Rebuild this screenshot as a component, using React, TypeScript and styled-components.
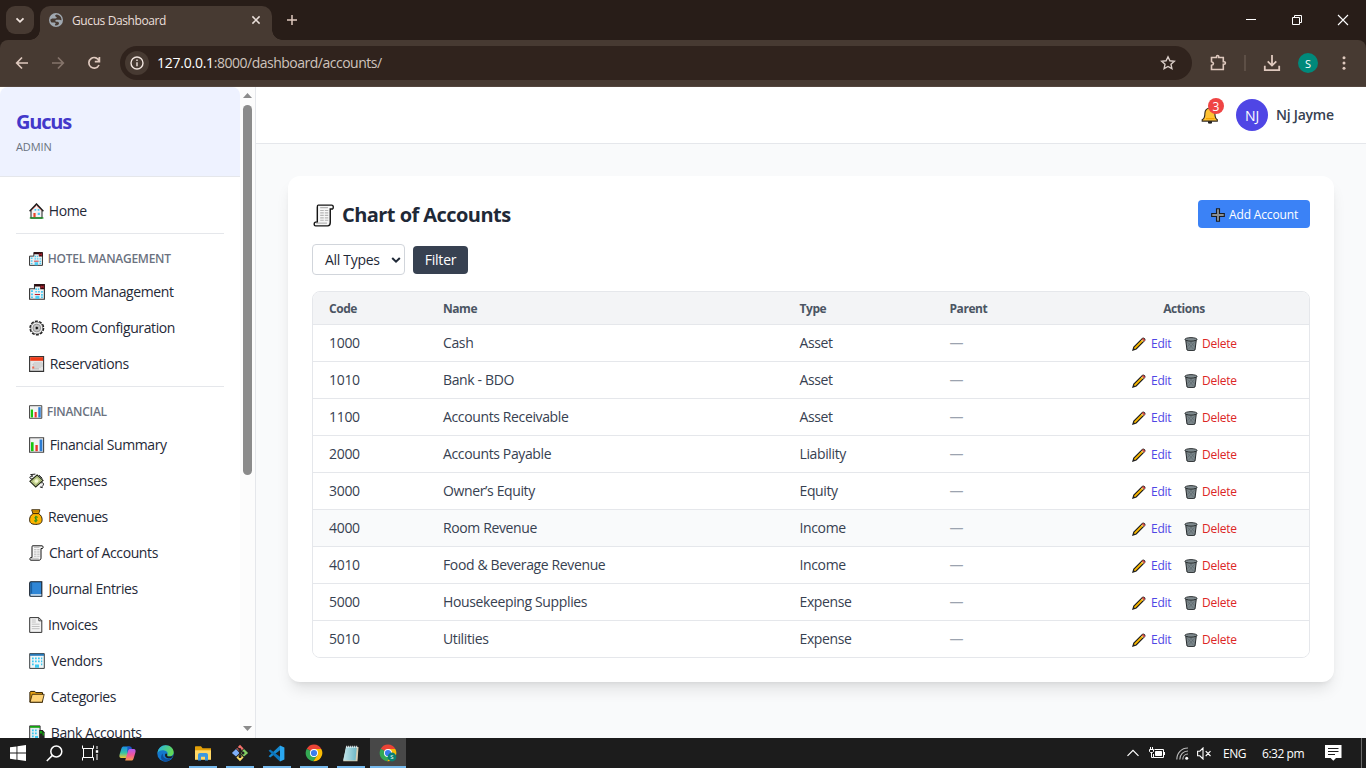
import React from 'react';
import styled, { createGlobalStyle } from 'styled-components';

const GlobalStyle = createGlobalStyle`
  *, *::before, *::after { box-sizing: border-box; }
  html, body { margin: 0; padding: 0; }
  body {
    width: 1366px; height: 768px; overflow: hidden;
    font-family: "Open Sans", "Noto Sans", sans-serif;
    color: #1f2937;
  }
  svg { display: block; flex: none; }
  button { font: inherit; border: 0; margin: 0; padding: 0; background: none; letter-spacing: inherit; }
`;

const Screen = styled.div`
  width: 1366px; height: 768px; display: flex; flex-direction: column; overflow: hidden;
`;

/* ---------- Browser frame ---------- */

const TabStrip = styled.div`
  height: 40px; flex: none; display: flex; background: #281d18; padding-left: 6px;
`;
const TabSearch = styled.button`
  width: 28px; height: 28px; margin-top: 6px; border-radius: 9px; background: #473a32;
  display: flex; align-items: center; justify-content: center;
`;
const Tab = styled.div`
  position: relative; width: 232px; height: 34px; margin: 6px 0 0 6px; padding: 0 9px 6px 9px;
  border-radius: 10px 10px 0 0; background: #473a32; display: flex; align-items: center;
  &::before, &::after {
    content: ""; position: absolute; bottom: 0; width: 10px; height: 10px;
  }
  &::before { left: -10px; background: radial-gradient(circle at 0 0, transparent 9.5px, #473a32 10px); }
  &::after { right: -10px; background: radial-gradient(circle at 100% 0, transparent 9.5px, #473a32 10px); }
`;
const TabTitle = styled.span`
  flex: 1; margin-left: 9px; padding-top: 2px; font-size: 12px; line-height: 16px; color: #eadfda; letter-spacing: -0.4px;
`;
const NewTab = styled.button`
  width: 40px; height: 40px; display: flex; align-items: center; justify-content: center;
`;
const WindowControls = styled.div`
  margin-left: auto; display: flex;
`;
const WindowButton = styled.button`
  width: 46px; height: 40px; display: flex; align-items: center; justify-content: center;
`;
const ToolbarBack = styled.div`
  height: 47px; flex: none; background: #281d18;
`;
const Toolbar = styled.div`
  height: 47px; background: #473a32; border-bottom: 1px solid #54463e; border-radius: 8px 8px 0 0;
  display: flex; align-items: center; padding-left: 4px; overflow: hidden;
`;
const ToolButton = styled.button<{ $w?: number }>`
  width: ${p => p.$w ?? 36}px; height: 36px; flex: none; display: flex; align-items: center; justify-content: center;
`;
const Omnibox = styled.div`
  width: 1072px; height: 34px; flex: none; margin-left: 8px; padding: 0 16px 0 5px; border-radius: 17px; background: #30231d;
  display: flex; align-items: center;
`;
const SiteInfo = styled.span`
  width: 24px; height: 24px; border-radius: 50%; background: #473a32; display: flex; align-items: center; justify-content: center;
`;
const Address = styled.span`
  flex: 1; margin-left: 8px; font-size: 14px; line-height: 20px; color: #cfc3bd; letter-spacing: -0.5px;
  b { font-weight: 400; color: #fff; letter-spacing: -0.25px; }
`;
const ToolbarRule = styled.span`
  width: 2px; height: 16px; flex: none; background: #5d4f46;
`;
const Profile = styled.span`
  width: 20px; height: 20px; flex: none; border-radius: 50%; background: #00897b; color: #fff; font-size: 11px;
  display: flex; align-items: center; justify-content: center;
`;

/* ---------- Application ---------- */

const Page = styled.div`
  flex: 1; min-height: 0; display: flex; background: #f9fafb;
`;
const Sidebar = styled.aside`
  width: 256px; flex: none; display: flex; background: #fff; border-right: 1px solid #e5e7eb; overflow: hidden;
`;
const SidebarBody = styled.div`
  width: 240px; overflow: hidden;
`;
const Brand = styled.div`
  height: 90px; padding: 21px 16px 0; background: #eef2ff; border-bottom: 1px solid #e5e7eb; border-radius: 8px 8px 0 0;
`;
const BrandName = styled.div`
  font-size: 20px; line-height: 28px; font-weight: 700; color: #4338ca; letter-spacing: -1.2px;
`;
const BrandRole = styled.div`
  margin-top: 3px; font-size: 11px; line-height: 16px; color: #6b7280; letter-spacing: -0.1px;
`;
const Nav = styled.nav`
  padding: 16px 16px 0;
`;
const NavItem = styled.a`
  height: 36px; padding-left: 12px; display: flex; align-items: center;
  font-size: 14px; line-height: 20px; color: #1f2937; letter-spacing: -0.4px; white-space: nowrap;
`;
const NavGroup = styled.div`
  margin-top: 4px; border-top: 1px solid #e5e7eb; padding-top: 16px;
`;
const NavLabel = styled.div`
  height: 24px; padding: 1px 0 7px 12px; display: flex; align-items: center;
  font-size: 12px; line-height: 16px; font-weight: 600; color: #6b7280; letter-spacing: -0.27px; white-space: nowrap;
`;
const IconSlot = styled.span<{ $w: number }>`
  width: ${p => p.$w}px; padding-left: 1px; flex: none;
`;
const ScrollTrack = styled.div`
  width: 15px; background: #fcfcfc; display: flex; flex-direction: column; align-items: center; padding: 6px 0 7px;
`;
const ScrollThumb = styled.div`
  width: 9px; height: 370px; margin: 7px 0 auto; border-radius: 5px; background: #8b8b8b;
`;
const Content = styled.div`
  flex: 1; min-width: 0; display: flex; flex-direction: column;
`;
const TopBar = styled.header`
  height: 57px; flex: none; padding-right: 32px; background: #fff; border-bottom: 1px solid #e5e7eb;
  display: flex; align-items: center; justify-content: flex-end;
`;
const Bell = styled.span`
  position: relative; width: 18px; height: 18px; margin-right: 17px;
`;
const Badge = styled.span`
  position: absolute; left: 7px; top: -8px; width: 16px; height: 16px; border-radius: 50%; background: #ef4444;
  color: #fff; font-size: 12px; line-height: 17px; text-align: center;
`;
const Avatar = styled.span`
  width: 32px; height: 32px; margin-right: 8px; border-radius: 50%; background: #4f46e5; color: #fff;
  font-size: 14px; font-weight: 500; letter-spacing: -0.2px; display: flex; align-items: center; justify-content: center;
`;
const UserName = styled.span`
  width: 58px; font-size: 14px; line-height: 20px; font-weight: 600; color: #374151; white-space: nowrap; letter-spacing: -0.25px;
`;
const Card = styled.main`
  margin: 32px 32px 0; height: 506px; padding: 24px; background: #fff; border-radius: 12px;
  box-shadow: 0 10px 15px -3px rgba(0,0,0,.1), 0 4px 6px -4px rgba(0,0,0,.1);
`;
const CardHead = styled.div`
  height: 28px; display: flex; align-items: center; justify-content: space-between;
`;
const Title = styled.h1`
  margin: 0; padding: 2px 0 0 1px; display: flex; align-items: center; gap: 6px;
  font-size: 20px; line-height: 28px; font-weight: 700; color: #1f2937; letter-spacing: -0.55px;
`;
const PrimaryButton = styled.button`
  && { width: 112px; height: 28px; padding: 1px 0 0 13px; border-radius: 4px; background: #3b82f6; color: #fff;
  display: flex; align-items: center; gap: 4px; font-size: 12px; font-weight: 500; letter-spacing: -0.15px; white-space: nowrap; }
`;
const Filters = styled.div`
  margin-top: 16px; height: 31px; display: flex; align-items: center; gap: 8px;
`;
const TypeSelect = styled.button`
  && { width: 93px; height: 31px; padding: 0 3px 0 12px; border: 1px solid #d1d5db; border-radius: 4px; background: #fff;
  color: #1f2937; display: flex; align-items: center; justify-content: space-between; font-size: 14px; letter-spacing: -0.3px; }
`;
const FilterButton = styled.button`
  && { width: 55px; height: 28px; border-radius: 4px; background: #374151; color: #fff; font-size: 14px; letter-spacing: -0.2px; }
`;
const Table = styled.div`
  margin-top: 16px; border: 1px solid #e5e7eb; border-radius: 8px; overflow: hidden;
`;
const Row = styled.div<{ $hover?: boolean }>`
  height: 37px; display: grid; grid-template-columns: 114px 356.5px 150px 125.5px 250px; align-items: center;
  border-top: 1px solid #e5e7eb; background: ${p => (p.$hover ? '#f9fafb' : '#fff')};
  font-size: 14px; color: #374151; letter-spacing: -0.37px;
`;
const HeadRow = styled(Row)`
  height: 32px; padding-top: 2px; border-top: 0; background: #f3f4f6; color: #4b5563; font-size: 12px; font-weight: 700; letter-spacing: -0.45px;
`;
const Cell = styled.span<{ $center?: boolean; $muted?: boolean; $code?: boolean }>`
  padding: ${p => (p.$center ? '0' : '0 0 0 16px')}; text-align: ${p => (p.$center ? 'center' : 'left')};
  color: ${p => (p.$muted ? '#9ca3af' : 'inherit')}; line-height: 20px; white-space: nowrap;
  letter-spacing: ${p => (p.$code ? '-0.3px' : 'inherit')};
`;
const Actions = styled.span`
  display: flex; align-items: center; padding: 2px 0 0 73px; font-size: 12px; letter-spacing: -0.25px;
`;
const Action = styled.a<{ $danger?: boolean }>`
  width: ${p => (p.$danger ? 'auto' : '51.5px')}; display: flex; align-items: center; gap: ${p => (p.$danger ? 4.5 : 5)}px;
  color: ${p => (p.$danger ? '#dc2626' : '#4f46e5')}; line-height: 16px;
`;

/* ---------- Windows taskbar ---------- */

const Taskbar = styled.footer`
  height: 30px; flex: none; background: #1c1c1c; display: flex; color: #fff;
`;
const TaskSlot = styled.span<{ $w?: number; $open?: boolean; $active?: boolean }>`
  width: ${p => p.$w ?? 37}px; height: 30px; display: flex; flex-direction: column; align-items: center; justify-content: center;
  background: ${p => (p.$active ? 'linear-gradient(#484848,#484848) center / 36px 100% no-repeat' : 'transparent')};
  position: relative;
  &::after {
    content: ""; position: absolute; bottom: 0; height: 2px; background: #76b9ed;
    width: ${p => (p.$active ? 36 : p.$open ? 28 : 0)}px;
  }
`;
const Tray = styled.div`
  margin-left: auto; display: flex; align-items: center; font-size: 12px; letter-spacing: -0.45px; white-space: nowrap;
`;
const TrayItem = styled.span<{ $w: number }>`
  width: ${p => p.$w}px; flex: none; display: flex; align-items: center;
`;
const ShowDesktop = styled.span`
  width: 5px; height: 30px; border-left: 1px solid #6a6a6a;
`;

/* ---------- Drawings ---------- */

type IconProps = { s?: number };
const Svg = ({ s = 16, children }: { s?: number; children: React.ReactNode }) => (
  <svg width={s} height={s} viewBox="0 0 16 16" fill="none">{children}</svg>
);

const HomeIcon = ({ s }: IconProps) => (
  <Svg s={s}>
    <path d="M2 7 7.5 1.5 13 7v8H2z" fill="#f2f2f2" stroke="#222" />
    <path d="M.6 8.2 7.5 1 14.4 8.2" stroke="#222" strokeWidth="1.5" />
    <path d="M2.6 7.5 7.5 2.5l4.9 5" stroke="#d06a62" strokeWidth=".8" />
    <path d="M5.5 6h1.7v1.8H5.5zM8.7 6h1.7v1.8H8.7zM8.7 9.8h2.2v2.2H8.7z" fill="#4cc8f4" />
    <path d="M4.4 10h2.2v4.4H4.4z" fill="#e8472b" />
    <path d="M.8 15h13.6" stroke="#16911f" strokeWidth="1.4" />
  </Svg>
);
const HotelIcon = ({ s }: IconProps) => (
  <Svg s={s}>
    <path d="M.6 4.7h4.9V.6h9.9v14.7H.6z" fill="#eceff0" stroke="#333" strokeWidth="1.1" />
    <path d="M5.6.2h10v5h-4.4V2.6H5.6z" fill="#2d0a0d" />
    <path d="M12.2 1.5v2.7M14.2 1.5v2.7M12.2 2.8h2" stroke="#d0283b" strokeWidth=".8" />
    <path d="M2 6.3h2v1.7H2zM6.3 4.2h1.8v1.7H6.3zM9 4.2h1.2v1.7H9zM6.3 7h1.8v1.6H6.3zM9 7h1.8v1.6H9zM12 7h1.9v1.7H12zM2 9.5h2v1.7H2zM12 10h1.9v1.7H12zM2 12.5h2v1.5H2zM12 12.6h1.9v1.4H12zM6.4 11.8h4v3.2h-4z" fill="#4dcbf3" />
    <path d="M5.8 10.5H11" stroke="#bf1f2b" />
  </Svg>
);
const GearIcon = ({ s }: IconProps) => (
  <Svg s={s}>
    <circle cx="7.8" cy="8" r="6.7" stroke="#222" strokeWidth="1.6" strokeDasharray="2.9 1.31" />
    <circle cx="7.8" cy="8" r="6" fill="#ececec" stroke="#444" strokeWidth=".7" />
    <circle cx="7.8" cy="8" r="3.9" fill="#c4c4c4" stroke="#888" strokeWidth=".8" />
    <circle cx="7.8" cy="8" r="1.7" fill="#111" stroke="#eee" strokeWidth=".5" />
  </Svg>
);
const CalendarIcon = ({ s }: IconProps) => (
  <Svg s={s}>
    <path d="M.6.6h14v14.8H.6z" fill="#e5e5e5" stroke="#333" strokeWidth="1.1" />
    <path d="M1.2 1.2h12.9v3.6H1.2z" fill="#f03a17" />
    <path d="M5 7h8v5H3V9h2z" fill="#fff" />
    <path d="M5 7h8M3 9h10M3 11h10M3 13h7M5 7v6M7 7v6M9 7v6M11 7v5M13 7v4" stroke="#aaa" strokeWidth=".6" />
    <path d="M3.2 10.5h2v2h-2z" fill="#ef6950" />
  </Svg>
);
const BarsIcon = ({ s }: IconProps) => (
  <Svg s={s}>
    <path d="M.6.8h14v14.4H.6z" fill="#f2f2f2" stroke="#444" strokeWidth="1.1" />
    <path d="M2 5.2h2.6v9H2z" fill="#16c60c" />
    <path d="M6.4 8h2.4v6.2H6.4z" fill="#e8352b" />
    <path d="M10.6 2.5h2.8v11.7h-2.8z" fill="#2b7cd3" />
  </Svg>
);
const CashIcon = ({ s }: IconProps) => (
  <Svg s={s}>
    <path d="M3.6 5.8C1.5 6.2.4 4.8 1 3.8c.8-.5 1.8 0 2.8-.8L1.6 1.6l4.8-.5M12.3 9.8c2.1-.6 2.6 1 2 2.3-.5 1-1.8 1.2-1 2.6l-2.4-.8" fill="#eee" stroke="#222" strokeWidth="1" />
    <path d="M8.1 2 14 7.4 6.7 14 .9 8.3z" fill="#cddb98" stroke="#222818" strokeWidth="1.1" />
    <path d="m8 3.8 4 3.6-5.2 4.7-4-3.8z" stroke="#7d8e50" strokeWidth=".6" />
    <path d="m10 2.2 3.4 3.2" stroke="#222" strokeWidth="1" />
    <circle cx="7.4" cy="8" r="1.8" fill="#f4f8d4" />
  </Svg>
);
const MoneyBagIcon = ({ s }: IconProps) => (
  <Svg s={s}>
    <path d="M2.7.8h8.2L9.7 4.6c2.6 1.8 3.4 3.9 3.4 6.2 0 3-1.8 4.6-6.3 4.6S.6 13.8.6 10.8c0-2.3.8-4.4 3.4-6.2z" fill="#fdb400" stroke="#33240a" strokeWidth="1" />
    <path d="M3.4 1.4h6.8l-.8 2.1H4.2z" fill="#c98500" />
    <path d="M4 4.6h5.8" stroke="#3d2500" />
    <path d="M8.8 8.3c-2.6-1.3-4 .7-1.9 1.6 2 1 1.7 2.8-1.8 1.9M6.9 6.8v6.6" stroke="#17911d" strokeWidth="1" />
  </Svg>
);
const ScrollIcon = ({ s }: IconProps) => (
  <Svg s={s}>
    <path d="M3.5.8h9.5c1.4 0 1.4 2.2.5 2.7h-1.5v9.4c0 1.5-.8 2.3-1.8 2.3H1.8C.5 15.2.5 13 1.6 12.6H3V2.2C3 1.3 3.1.8 3.5.8z" fill="#f7f7f7" stroke="#151515" strokeWidth="1" />
    <path d="M5 2.5h5.4M5 4.5h2.5M8.2 4.5h2.4M5 6.2h2.5M8.2 6.2h2.4M5 7.9h2.5M8.2 7.9h2.4M5 9.6h2.5M8.2 9.6h2.4M5 11.3h2.5M8.2 11.3h2.4" stroke="#b5b5b5" strokeWidth=".8" />
    <path d="M2.2 13.3h7.5" stroke="#aaa" strokeWidth=".7" />
  </Svg>
);
const BookIcon = ({ s }: IconProps) => (
  <Svg s={s}>
    <path d="M.7 2.2C.7 1.2 1.2.8 2 .8h10.8v14.5H2c-.8 0-1.3-.5-1.3-1.3z" fill="#2f86d6" stroke="#151c26" strokeWidth="1.1" />
    <path d="M2.6 1.5v11" stroke="#0c4c8c" strokeWidth=".7" />
    <path d="M1.6 13.2h10.8v1.5H1.6z" fill="#dbe5ec" />
  </Svg>
);
const PageIcon = ({ s }: IconProps) => (
  <Svg s={s}>
    <path d="M.7.6h9.1l3 3v11.8H.7z" fill="#f3f3f3" stroke="#333" strokeWidth="1" />
    <path d="M9.8.8v3h3" stroke="#333" strokeWidth=".9" />
    <path d="M2.8 5h4M2.8 7.2h7.8M2.8 9.5h7.8M2.8 11.7h7.8M2.8 3h4" stroke="#bbb" strokeWidth=".9" />
  </Svg>
);
const OfficeIcon = ({ s }: IconProps) => (
  <Svg s={s}>
    <path d="M.7.6h14.6v14.8H.7z" fill="#eef5f7" stroke="#3a3f42" strokeWidth="1" />
    <path d="M1 .8h14v2H1z" fill="#2678b8" />
    <path d="M3 4.5h1.7v1.7H3zM6 4.5h1.7v1.7H6zM9 4.5h1.7v1.7H9zM12 4.5h1.3v1.7H12zM3 7.5h1.7v1.7H3zM6 7.5h1.7v1.7H6zM9 7.5h1.7v1.7H9zM12 7.5h1.3v1.7H12zM3 10.5h1.7v1.7H3zM12 10.5h1.3v1.7H12zM6 11.5h4v3.2H6z" fill="#3bc8f1" />
  </Svg>
);
const FolderIcon = ({ s }: IconProps) => (
  <Svg s={s}>
    <path d="M.9 13.2V3.1l.8-.7h4.1l1 1.2h6.7v9.6z" fill="#e8a313" stroke="#2b1b00" strokeWidth="1" />
    <path d="M3.2 5.3h12l-1.9 7.9H1.1z" fill="#ffd375" stroke="#2b1b00" strokeWidth=".8" />
  </Svg>
);
const BankIcon = ({ s }: IconProps) => (
  <Svg s={s}>
    <path d="M.7.9h10.4v14.3H.7z" fill="#e4edf0" stroke="#333" strokeWidth="1" />
    <path d="M1 1h10v1.8H1z" fill="#13a10e" />
    <path d="M3 4.5h1.7v1.7H3zM6 4.5h1.7v1.7H6zM3 7.5h1.7v1.7H3zM6 7.5h1.7v1.7H6zM3 10.5h1.7v1.7H3zM6 11h3v4H6z" fill="#3bc8f1" />
    <path d="M10.2 5h3.4l2 2.3v8.5h-5.4z" fill="#222" />
    <path d="M11 6h2.2v2.6H11zM13.6 7.6h1.3v3h-1.3z" fill="#13a10e" />
  </Svg>
);
const PencilIcon = () => (
  <Svg s={14}>
    <path d="M1 15 2.1 11.4 12 1.5c1-1 3.4 1.1 2.5 2.4L4.8 13.7z" fill="#fbb900" stroke="#1a1a1a" strokeWidth="1.3" />
    <path d="m12 1.8 2.5 2.4" stroke="#e0485c" strokeWidth="1.7" />
    <path d="m10.6 3.2 2.3 2.3" stroke="#ddd" strokeWidth="1" />
    <path d="m1.2 14.8.6-2.4 1.8 1.8z" fill="#222" />
  </Svg>
);
const TrashIcon = () => (
  <Svg s={14}>
    <path d="M2 3.8h12l-1.4 11-2 .8H5.4l-2-.8z" fill="#7b868a" stroke="#1f2325" strokeWidth="1.1" />
    <path d="m4 6 7 8M7 5l5 6M12 6l-7 8M9 5l-5 6" stroke="#59646a" strokeWidth=".7" />
    <ellipse cx="8" cy="2.7" rx="6.9" ry="2" fill="#7f8a8e" stroke="#1f2325" strokeWidth="1" />
  </Svg>
);
const PlusIcon = () => (
  <svg width="14" height="14" viewBox="0 0 14 14">
    <path d="M5.5.7h3v4.8h4.8v3H8.5v4.8h-3V8.5H.7v-3h4.8z" fill="#8a8f94" stroke="#181c22" strokeWidth="1.1" />
  </svg>
);
const BellIcon = () => (
  <svg width="18" height="18" viewBox="0 0 18 18" fill="none">
    <path d="M7.5 15.2h3v1.9h-3z" fill="#222" stroke="#222" />
    <path d="M9 2c3.3 0 4.9 2.3 4.9 5.2 0 3.7.6 5.6 2.4 6.5v1.4H1.2v-1.4c2-.9 2.7-2.8 2.7-6.5C3.9 4.3 5.7 2 9 2z" fill="#ffc233" stroke="#332a20" strokeWidth="1.1" />
    <path d="M5 12.6h8.5" stroke="#f5a300" strokeWidth="1.2" />
  </svg>
);

const GlobeIcon = () => (
  <svg width="14" height="14" viewBox="0 0 14 14">
    <circle cx="7" cy="7" r="7" fill="#a0a8b0" />
    <path d="M7.6 1.6C5.8 2 5.6 3.4 7.2 3.9c1.2.4.4 1.5-.8 1.5H3.9C2.6 5.4 2 6 1.3 6.8c0 1 .5 2 1.2 2.8h3c1 0 1.6.8.8 1.5-.6.6-.5 1.1.2 1.4 2.2.3 3.6-.9 3.5-2.2-.1-1.2-1.2-1.5-2.4-1.5-1.6 0-1.8-1.6-.3-2h3.1c.8.1 1.2.7 2.1.5.3-2.6-1.6-5.3-4.9-5.7z" fill="#473a32" />
  </svg>
);
const Stroke = ({ d, w = 16, c = '#dfc9be', sw = 1.7, h }: { d: string; w?: number; h?: number; c?: string; sw?: number }) => (
  <svg width={w} height={h ?? w} viewBox={`0 0 ${w} ${h ?? w}`} fill="none" stroke={c} strokeWidth={sw}><path d={d} /></svg>
);

const ChromeIcon = ({ badge }: { badge?: boolean }) => (
  <svg width="18" height="18" viewBox="0 0 18 18">
    <path d="M9 9 1.8 4.8A8.2 8.2 0 0 1 16.3 5H9z" fill="#ea4335" />
    <path d="M9 9 1.8 4.7A8.3 8.3 0 0 0 8.2 17.2L12.6 11z" fill="#34a853" />
    <path d="M9 5h7.3A8.3 8.3 0 0 1 8.2 17.2L12.6 11z" fill="#fbbc04" />
    <circle cx="9" cy="9" r="4" fill="#fff" /><circle cx="9" cy="9" r="3.1" fill="#3b7ded" />
    {badge && <><circle cx="13" cy="13" r="4.4" fill="#0b8073" /><text x="13" y="15.2" textAnchor="middle" fontSize="6" fill="#fff">S</text></>}
  </svg>
);
const WindowsLogo = () => (
  <svg width="16" height="16" viewBox="0 0 16 16" fill="#fff"><path d="M0 2.3 6.5 1.4v6.2H0zM7.4 1.3 16 0v7.6H7.4zM0 8.5h6.5v6.2L0 13.8zM7.4 8.5H16V16l-8.6-1.2z" /></svg>
);
const TaskViewIcon = () => (
  <svg width="17" height="16" viewBox="0 0 17 16" fill="none" stroke="#fff" strokeWidth="1">
    <path d="M.5.5v3h11v-3M.5 15.5v-3h11v3M1.5 3.5v9M10.5 3.5v9M15 1v3M15 9v6" /><path d="M13.8 5.2h2.4v2.6h-2.4z" fill="#fff" stroke="none" />
  </svg>
);
const CopilotIcon = () => (
  <svg width="17" height="15" viewBox="0 0 17 15">
    <defs>
      <linearGradient id="cpA" x1="0" y1="0" x2="0" y2="1"><stop stopColor="#1b8de8" /><stop offset=".55" stopColor="#35c3a5" /><stop offset="1" stopColor="#f3c832" /></linearGradient>
      <linearGradient id="cpB" x1="0" y1="0" x2="0" y2="1"><stop stopColor="#ae5cf0" /><stop offset=".5" stopColor="#f2569a" /><stop offset="1" stopColor="#fb9a4d" /></linearGradient>
    </defs>
    <path d="M4.8.5h6L8 10.2c-.4 1.3-1 1.8-2 1.8H2.3C.4 12 .1 10.2.6 8.4L2.5 2.3C2.9 1 3.6.5 4.8.5z" fill="url(#cpA)" />
    <path d="M12.2 14.6h-6L9 4.8C9.4 3.5 10 3 11 3h3.7c1.9 0 2.2 1.8 1.7 3.6l-1.9 6.2c-.4 1.3-1.1 1.8-2.3 1.8z" fill="url(#cpB)" />
    <path d="M8.5.5h2.6c1 0 1.5.7 1.8 2.5H11c-1 0-1.6.5-2 1.8l-.9 2.9z" fill="#1b56c7" />
  </svg>
);
const EdgeIcon = () => (
  <svg width="17" height="17" viewBox="0 0 17 17">
    <defs><linearGradient id="edA" x1="0" y1="0" x2="1" y2=".3"><stop stopColor="#25b3e8" /><stop offset="1" stopColor="#62d957" /></linearGradient></defs>
    <circle cx="8.5" cy="8.5" r="8.2" fill="#1377cc" />
    <path d="M.4 8.2C1.2 3.2 4.7.3 8.7.3c4.8 0 8 3.4 8 7 0 2.6-1.9 4-4.1 4-1.7 0-2.8-.6-2.3-1.3 1-1.5.2-4.3-3.2-4.6C3.6 5 1.3 6.4.4 8.2z" fill="url(#edA)" />
    <path d="M6 8.4c-1 4 3.1 7 9 4.4-1 1.7-3.6 3.9-6.6 3.9-4 0-6.2-5.7-2.4-8.3z" fill="#0d4f9e" />
    <path d="M10.2 10c-.5.9.6 1.6 2.4 1.6 1.5 0 2.7-.4 3.5-1.3l-1 2.2c-3.4 1.8-7.7.4-7-3 .4-1.7 2.2-1.4 2.1.5z" fill="#1c1c1c" />
  </svg>
);
const ExplorerIcon = () => (
  <svg width="16" height="15" viewBox="0 0 16 15"><path d="M0 1.2C0 .5.3.2 1 .2h5l1.6 2H16V13H0z" fill="#e3a008" /><path d="M0 4.3h16v9.5H0z" fill="#ffd765" /><path d="M3 14.6V9.3C3 7.8 3.8 7 5 7h6c1.3 0 2 .8 2 2.3v5.3h-3v-3.8H6v3.8z" fill="#3a97e0" /></svg>
);
const GitIcon = () => (
  <svg width="18" height="18" viewBox="0 0 18 18"><path d="m9 .8 3.6 3.6L9 8 5.4 4.4z" fill="#f3716a" /><path d="M5 4.9 8.5 9 5 12.6.9 9z" fill="#7eaef8" /><path d="m13 4.9 4.1 4.1-4.1 3.6L9.5 9z" fill="#82cf63" /><path d="m9 10 3.6 3.6L9 17.2l-3.6-3.6z" fill="#f9dc6c" /><path d="M9 4v10M6 3l6 6" stroke="#231f20" strokeWidth="1.3" /><circle cx="9" cy="6" r="1.5" fill="#231f20" /><circle cx="12" cy="9" r="1.5" fill="#231f20" /><circle cx="9" cy="12.4" r="1.5" fill="#231f20" /></svg>
);
const CodeIcon = () => (
  <svg width="17" height="17" viewBox="0 0 17 17"><path d="M12 .5 16.4 2.4v12.2L12 16.5z" fill="#2aa7f0" /><path d="M12 .5v4.7L2.2 12.6.6 11.2z" fill="#1689d1" /><path d="M12 16.5v-4.7L2.2 4.4.6 5.8z" fill="#0c75bd" /></svg>
);
const NotepadIcon = () => (
  <svg width="17" height="17" viewBox="0 0 17 17">
    <defs><linearGradient id="npA" x1="0" y1="0" x2="1" y2="0"><stop stopColor="#c4e6ea" /><stop offset="1" stopColor="#6db6c4" /></linearGradient></defs>
    <path d="M4.2 2h12.3l-1 14.2H1.2z" fill="#d8ccb0" /><path d="M4 1.8h10.8L13.6 15.6H1.2z" fill="url(#npA)" /><path d="M4.2 1.8h12" stroke="#e8eef0" strokeWidth="2.2" strokeDasharray="1 1" />
  </svg>
);

/* ---------- Data ---------- */

type NavEntry = [React.ReactNode, string, number];
const hotel: NavEntry[] = [
  [<HotelIcon />, 'Room Management', 22.8],
  [<GearIcon />, 'Room Configuration', 22.8],
  [<CalendarIcon />, 'Reservations', 21.8],
];
const financial: NavEntry[] = [
  [<BarsIcon />, 'Financial Summary', 21.8],
  [<CashIcon />, 'Expenses', 20.8],
  [<MoneyBagIcon />, 'Revenues', 20],
  [<ScrollIcon />, 'Chart of Accounts', 20.9],
  [<BookIcon />, 'Journal Entries', 20.6],
  [<PageIcon />, 'Invoices', 20],
  [<OfficeIcon />, 'Vendors', 23],
  [<FolderIcon />, 'Categories', 22.8],
  [<BankIcon />, 'Bank Accounts', 22.8],
];
const accounts = [
  ['1000', 'Cash', 'Asset'],
  ['1010', 'Bank - BDO', 'Asset'],
  ['1100', 'Accounts Receivable', 'Asset'],
  ['2000', 'Accounts Payable', 'Liability'],
  ['3000', 'Owner’s Equity', 'Equity'],
  ['4000', 'Room Revenue', 'Income'],
  ['4010', 'Food & Beverage Revenue', 'Income'],
  ['5000', 'Housekeeping Supplies', 'Expense'],
  ['5010', 'Utilities', 'Expense'],
];

const NavLinks = ({ items }: { items: NavEntry[] }) => (
  <>
    {items.map(([icon, label, w]) => (
      <NavItem key={label}><IconSlot $w={w}>{icon}</IconSlot>{label}</NavItem>
    ))}
  </>
);

export default function App() {
  return (
    <Screen>
      <GlobalStyle />
      <TabStrip>
        <TabSearch><Stroke w={10} d="M1.5 3.3 5 6.8l3.5-3.5" c="#f0e4de" sw={1.8} /></TabSearch>
        <Tab>
          <GlobeIcon />
          <TabTitle>Gucus Dashboard</TabTitle>
          <Stroke w={14} d="M3.4 3.4l7.2 7.2M10.6 3.4l-7.2 7.2" c="#eadfda" sw={1.5} />
        </Tab>
        <NewTab><Stroke w={12} d="M6 1v10M1 6h10" sw={1.5} /></NewTab>
        <WindowControls>
          <WindowButton><Stroke w={10} d="M0 4.5h10" c="#fff" sw={1} /></WindowButton>
          <WindowButton><Stroke w={10} d="M.5 2.5h7v7h-7zM2.5 2.5v-2h7v7h-2" c="#fff" sw={1} /></WindowButton>
          <WindowButton><Stroke w={12} d="M1 1l10 10M11 1 1 11" c="#fff" sw={1.1} /></WindowButton>
        </WindowControls>
      </TabStrip>
      <ToolbarBack>
        <Toolbar>
          <ToolButton><Stroke d="M14 8H3M8 2.5 2.7 8 8 13.5" /></ToolButton>
          <ToolButton><Stroke d="M2 8h11M8 2.5 13.3 8 8 13.5" c="#85746b" /></ToolButton>
          <ToolButton><Stroke d="M13.2 6.2A5.3 5.3 0 1 0 13 10M13.4 2v4.6H8.8" /></ToolButton>
          <Omnibox>
            <SiteInfo>
              <svg width="14" height="14" viewBox="0 0 14 14" fill="none" stroke="#f0e4de" strokeWidth="1.4"><circle cx="7" cy="7" r="6" /><path d="M7 6.3v3.9M7 3.6v1.5" /></svg>
            </SiteInfo>
            <Address><b>127.0.0.1</b>:8000/dashboard/accounts/</Address>
            <Stroke d="M8 1.8l1.9 4 4.4.5-3.3 3 .9 4.4L8 11.5l-3.9 2.2.9-4.4-3.3-3 4.4-.5z" c="#d9cdc7" sw={1.4} />
          </Omnibox>
          <ToolButton $w={52}><Stroke w={18} d="M2.5 3.5h5V2.6a1 1 0 0 1 2.2 0v.9h4.6v4.3h.9a1.2 1.2 0 0 1 0 2.4h-.9v5.3H2.5v-4.2c2.6-.5 2.6-3.1 0-3.6z" sw={1.6} /></ToolButton>
          <ToolbarRule />
          <ToolButton $w={52}><Stroke w={18} d="M9 1v10.5M4.7 7.4 9 11.6l4.3-4.2M1.8 11.7v4.5h14.4v-4.5" sw={1.8} /></ToolButton>
          <Profile>S</Profile>
          <ToolButton $w={52}>
            <svg width="4" height="16" viewBox="0 0 4 16" fill="#dfc9be"><circle cx="2" cy="2.7" r="1.5" /><circle cx="2" cy="8" r="1.5" /><circle cx="2" cy="13.3" r="1.5" /></svg>
          </ToolButton>
        </Toolbar>
      </ToolbarBack>

      <Page>
        <Sidebar>
          <SidebarBody>
            <Brand>
              <BrandName>Gucus</BrandName>
              <BrandRole>ADMIN</BrandRole>
            </Brand>
            <Nav>
              <NavLinks items={[[<HomeIcon />, 'Home', 20.8]]} />
              <NavGroup>
                <NavLabel><IconSlot $w={19.8}><HotelIcon s={14} /></IconSlot>HOTEL MANAGEMENT</NavLabel>
                <NavLinks items={hotel} />
              </NavGroup>
              <NavGroup>
                <NavLabel><IconSlot $w={18.8}><BarsIcon s={14} /></IconSlot>FINANCIAL</NavLabel>
                <NavLinks items={financial} />
              </NavGroup>
            </Nav>
          </SidebarBody>
          <ScrollTrack>
            <svg width="9" height="5" viewBox="0 0 9 5"><path d="M4.5 0 9 5H0z" fill="#8b8b8b" /></svg>
            <ScrollThumb />
            <svg width="9" height="5" viewBox="0 0 9 5"><path d="M4.5 5 9 0H0z" fill="#8b8b8b" /></svg>
          </ScrollTrack>
        </Sidebar>
        <Content>
          <TopBar>
            <Bell><BellIcon /><Badge>3</Badge></Bell>
            <Avatar>NJ</Avatar>
            <UserName>Nj Jayme</UserName>
          </TopBar>
          <Card>
            <CardHead>
              <Title><ScrollIcon s={23} />Chart of Accounts</Title>
              <PrimaryButton><PlusIcon />Add Account</PrimaryButton>
            </CardHead>
            <Filters>
              <TypeSelect>All Types<Stroke w={10} d="M1.2 3 5 6.7 8.8 3" c="#1f2937" sw={2} /></TypeSelect>
              <FilterButton>Filter</FilterButton>
            </Filters>
            <Table>
              <HeadRow>
                <Cell>Code</Cell><Cell>Name</Cell><Cell>Type</Cell><Cell>Parent</Cell><Cell $center>Actions</Cell>
              </HeadRow>
              {accounts.map(([code, name, type]) => (
                <Row key={code} $hover={code === '4000'}>
                  <Cell $code>{code}</Cell><Cell>{name}</Cell><Cell>{type}</Cell><Cell $muted>—</Cell>
                  <Actions>
                    <Action><PencilIcon />Edit</Action>
                    <Action $danger><TrashIcon />Delete</Action>
                  </Actions>
                </Row>
              ))}
            </Table>
          </Card>
        </Content>
      </Page>

      <Taskbar>
        <TaskSlot $w={36}><WindowsLogo /></TaskSlot>
        <TaskSlot $w={36}>
          <svg width="17" height="17" viewBox="0 0 17 17" fill="none" stroke="#fff" strokeWidth="1.5"><circle cx="10.3" cy="6.5" r="5.5" /><path d="M6.4 10.4.8 16" /></svg>
        </TaskSlot>
        <TaskSlot $w={36}><TaskViewIcon /></TaskSlot>
        <TaskSlot $w={39}><CopilotIcon /></TaskSlot>
        <TaskSlot><EdgeIcon /></TaskSlot>
        <TaskSlot $open><ExplorerIcon /></TaskSlot>
        <TaskSlot $open><GitIcon /></TaskSlot>
        <TaskSlot $open><CodeIcon /></TaskSlot>
        <TaskSlot $open><ChromeIcon /></TaskSlot>
        <TaskSlot $open><NotepadIcon /></TaskSlot>
        <TaskSlot $active><ChromeIcon badge /></TaskSlot>
        <Tray>
          <TrayItem $w={22}><Stroke w={12} h={8} d="M.5 6.8 6 1.3l5.5 5.5" c="#fff" sw={1.2} /></TrayItem>
          <TrayItem $w={27}>
            <svg width="16" height="12" viewBox="0 0 16 12" fill="none" stroke="#fff" strokeWidth="1"><path d="M5.5 2.5h9v8h-10V7M15.5 5v3M1.5 0v2M3.5 0v2M.5 2.5h4v2l-1 1h-2l-1-1zM2.5 6v4.5h2" /><path d="M6.5 4.5h6v4h-6z" fill="#fff" /></svg>
          </TrayItem>
          <TrayItem $w={21}>
            <svg width="13" height="13" viewBox="0 0 13 13" fill="none" stroke="#bbb" strokeWidth="1.1"><path d="M.8 12.5C.8 6 5.5 1 12 1M3.8 12.5C3.8 7.8 7.4 4 12 4M6.8 12.5C6.8 9.4 9 7 12 7" /><circle cx="10.7" cy="11.2" r="1.5" fill="#fff" stroke="none" /></svg>
          </TrayItem>
          <TrayItem $w={26}>
            <svg width="15" height="13" viewBox="0 0 15 13" fill="none" stroke="#fff" strokeWidth="1.1"><path d="M.6 4.2h2.2L6 1v11L2.8 8.8H.6zM8.7 4.2l4.8 4.8M13.5 4.2 8.7 9" /></svg>
          </TrayItem>
          <TrayItem $w={39}>ENG</TrayItem>
          <TrayItem $w={63}>6:32 pm</TrayItem>
          <TrayItem $w={36}>
            <svg width="17" height="16" viewBox="0 0 17 16"><path d="M0 0h16.5v13H11l-2.7 2.7L5.6 13H0z" fill="#fff" /><path d="M3 3.5h10.5M3 6.5h10.5M3 9.5h7" stroke="#1c1c1c" /></svg>
          </TrayItem>
          <ShowDesktop />
        </Tray>
      </Taskbar>
    </Screen>
  );
}
